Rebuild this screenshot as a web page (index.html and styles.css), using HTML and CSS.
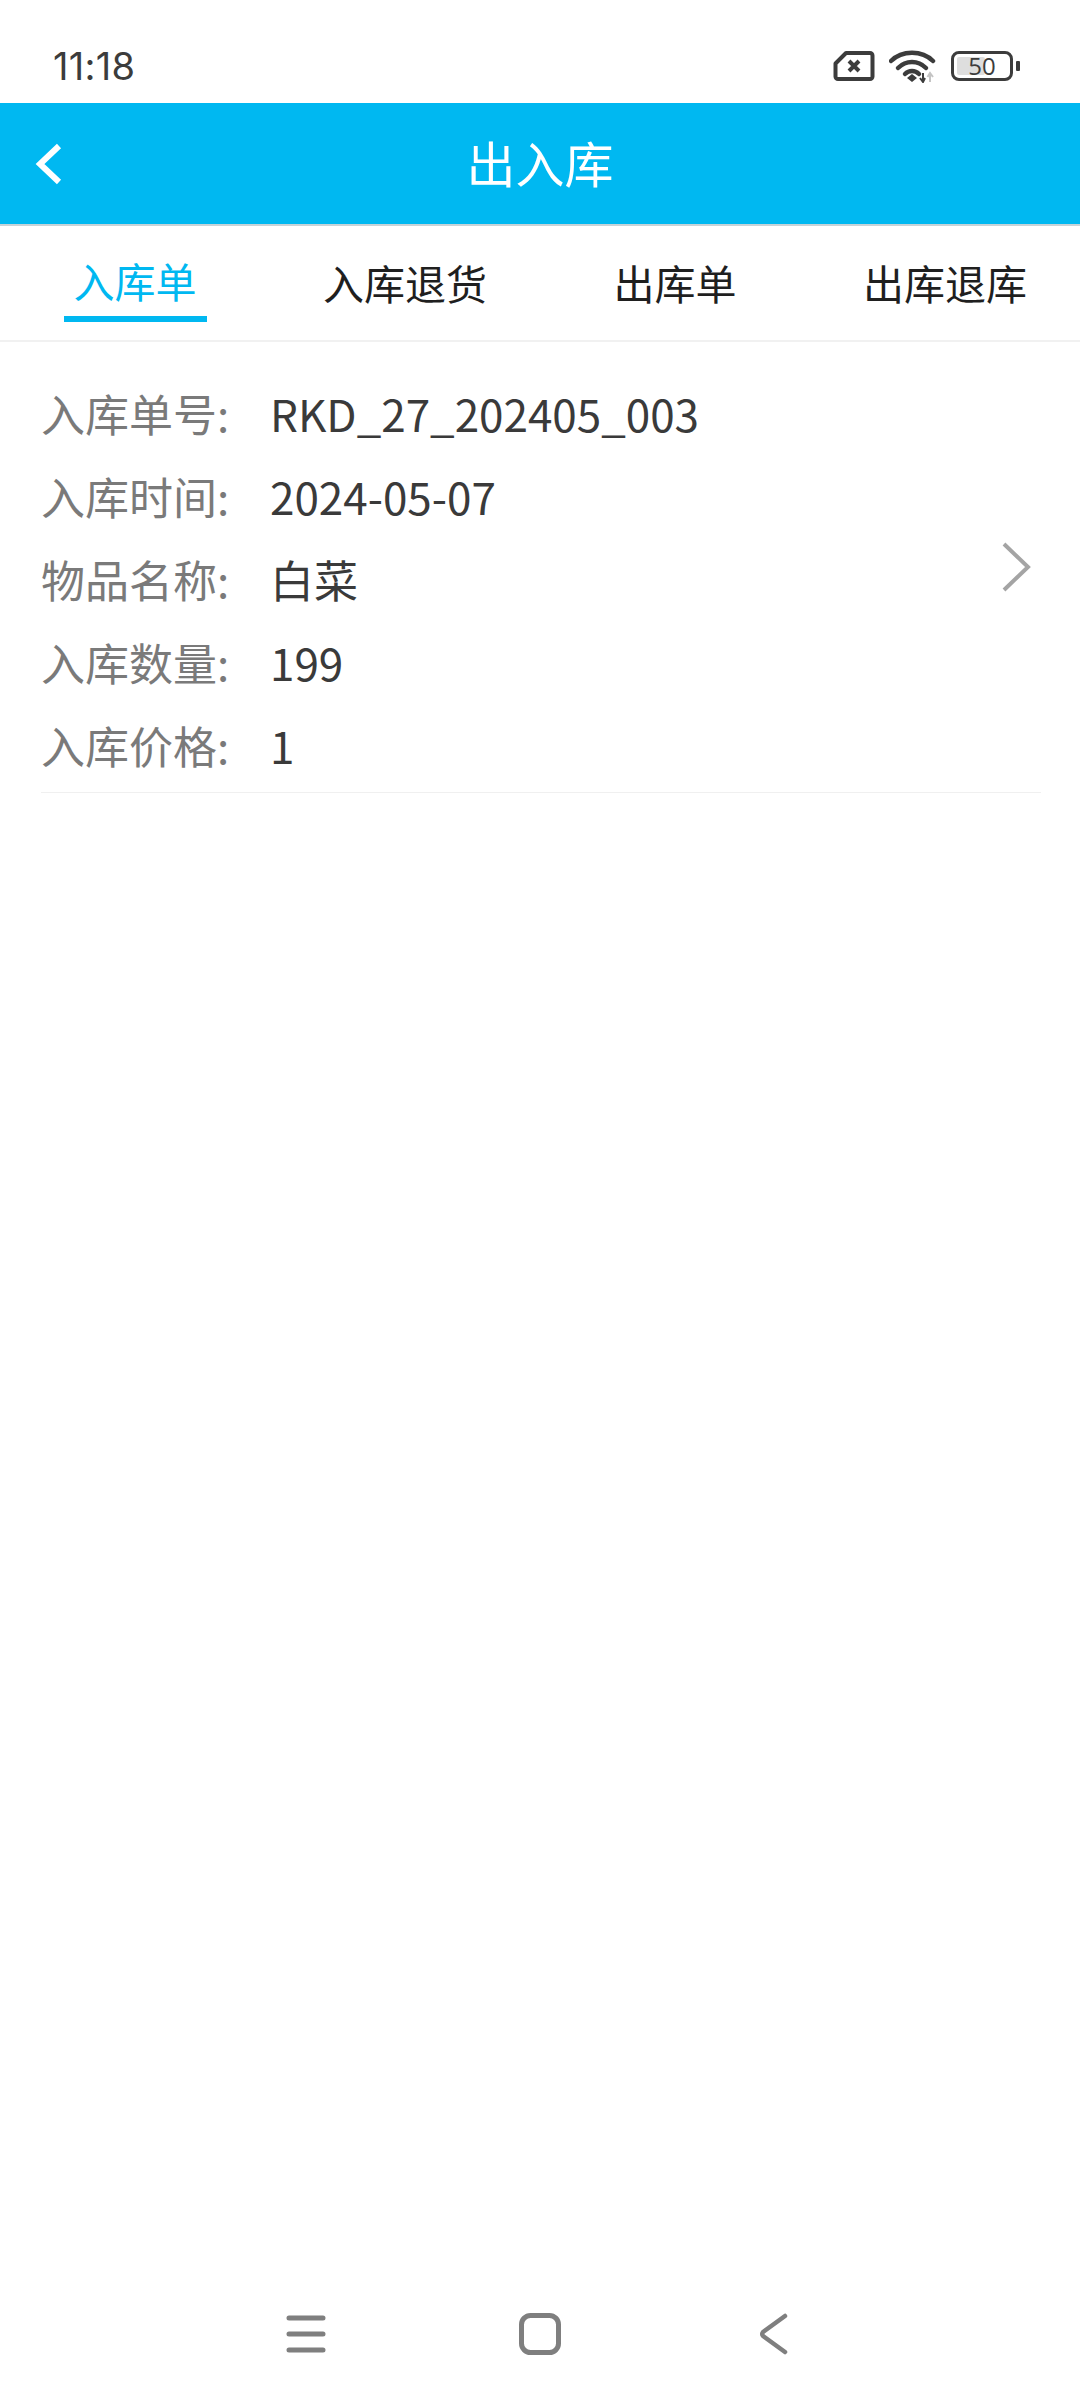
FILE: index.html
```html
<!DOCTYPE html>
<html lang="zh-CN">
<head>
  <meta charset="UTF-8">
  <meta name="viewport" content="width=device-width, initial-scale=1.0">
  <title>出入库</title>
  <link rel="stylesheet" href="styles.css">
</head>
<body>
  <div class="app">
    <div class="status-bar">
      <span class="time">11:18</span>
      <div class="status-icons">
        <svg class="icon-sim" width="42" height="32" viewBox="0 0 42 32">
          <path d="M13 3H37a2.500 2.500 0 0 1 2.500 2.500V26.500a2.500 2.500 0 0 1-2.500 2.500H5a2.500 2.500 0 0 1-2.500-2.500V13.500Z" fill="none" stroke="#3c3c3c" stroke-width="4" stroke-linejoin="round"/>
          <path d="M16 11L26 21M26 11L16 21" fill="none" stroke="#3c3c3c" stroke-width="4"/>
        </svg>
        <svg class="icon-wifi" width="48" height="34" viewBox="0 0 48 34">
          <path d="M2 12C13 1 33 1 44 12" fill="none" stroke="#3c3c3c" stroke-width="4.500" stroke-linecap="round"/>
          <path d="M9 19C17 11 29 11 37 19" fill="none" stroke="#3c3c3c" stroke-width="4.500" stroke-linecap="round"/>
          <path d="M16 25C20 21 26 21 30 25" fill="none" stroke="#3c3c3c" stroke-width="4.500" stroke-linecap="round"/>
          <path d="M18 29L23 25L28 29L23 33Z" fill="#3c3c3c"/>
          <path d="M34 24V33M31 29L34 33L36 29" fill="none" stroke="#3c3c3c" stroke-width="2"/>
          <path d="M41 33V24M38.500 28L41 24L44 28" fill="none" stroke="#c4c4c4" stroke-width="2"/>
        </svg>
        <div class="battery">
          <div class="battery-body">
            <div class="battery-level"></div>
            <span class="battery-text">50</span>
          </div>
          <div class="battery-cap"></div>
        </div>
      </div>
    </div>

    <div class="header">
      <svg class="header-back" width="30" height="44" viewBox="0 0 30 44">
        <path d="M25 4L6 22L25 40" fill="none" stroke="#fff" stroke-width="6"/>
      </svg>
      <span class="header-title">出入库</span>
    </div>

    <div class="tabs">
      <div class="tab active">入库单</div>
      <div class="tab">入库退货</div>
      <div class="tab">出库单</div>
      <div class="tab">出库退库</div>
    </div>

    <div class="record">
      <div class="record-fields">
        <div class="field"><span class="field-label">入库单号:</span><span class="field-value">RKD_27_202405_003</span></div>
        <div class="field"><span class="field-label">入库时间:</span><span class="field-value">2024-05-07</span></div>
        <div class="field"><span class="field-label">物品名称:</span><span class="field-value">白菜</span></div>
        <div class="field"><span class="field-label">入库数量:</span><span class="field-value">199</span></div>
        <div class="field"><span class="field-label">入库价格:</span><span class="field-value">1</span></div>
      </div>
      <svg class="record-arrow" width="30" height="50" viewBox="0 0 30 50">
        <path d="M2 2L26 25L2 48" fill="none" stroke="#a4a4a4" stroke-width="4"/>
      </svg>
    </div>

    <div class="nav-bar">
      <div class="nav-item">
        <svg width="40" height="38" viewBox="0 0 40 38">
          <path d="M3 3H37M3 19H37M3 35H37" fill="none" stroke="#7f7f7f" stroke-width="5" stroke-linecap="round"/>
        </svg>
      </div>
      <div class="nav-item">
        <svg width="42" height="42" viewBox="0 0 42 42">
          <rect x="2.500" y="2.500" width="37" height="37" rx="9" fill="none" stroke="#7f7f7f" stroke-width="5"/>
        </svg>
      </div>
      <div class="nav-item">
        <svg width="30" height="42" viewBox="0 0 30 42">
          <path d="M26 3L4 19Q2.500 21 4 23L26 39" fill="none" stroke="#7f7f7f" stroke-width="4.500" stroke-linecap="round"/>
        </svg>
      </div>
    </div>
  </div>
</body>
</html>
```

FILE: styles.css
```css
* {
  box-sizing: border-box;
}

body {
  margin: 0;
  background-color: #FFFFFF;
  font-family: "Noto Sans CJK SC", "Noto Sans", sans-serif;
}

.app {
  display: flex;
  flex-direction: column;
  width: 1080px;
  height: 2400px;
}

.status-bar {
  display: flex;
  justify-content: space-between;
  align-items: center;
  height: 103px;
  padding: 28px 60px 0 53px;
}

.time {
  font-family: "Inter", sans-serif;
  font-size: 38px;
  letter-spacing: 0.3px;
  color: #3c3c3c;
}

.status-icons {
  display: flex;
  align-items: center;
  gap: 14px;
}

.battery {
  display: flex;
  align-items: center;
  gap: 3px;
}

.battery-body {
  position: relative;
  display: flex;
  justify-content: center;
  align-items: center;
  width: 62px;
  height: 30px;
  border: 3px solid #3c3c3c;
  border-radius: 8px;
}

.battery-level {
  position: absolute;
  left: 3px;
  top: 3px;
  bottom: 3px;
  width: 28px;
  background-color: #dedede;
  border-radius: 2px;
}

.battery-text {
  position: relative;
  font-family: "Open Sans", sans-serif;
  font-size: 24px;
  line-height: 24px;
  color: #3c3c3c;
}

.battery-cap {
  width: 4px;
  height: 10px;
  background-color: #3c3c3c;
  border-radius: 1px;
}

.header {
  position: relative;
  display: flex;
  justify-content: center;
  align-items: center;
  flex-shrink: 0;
  height: 123px;
  padding-bottom: 5px;
  background-color: #00B8F1;
  border-bottom: 2px solid #c6d3d8;
}

.header-back {
  position: absolute;
  left: 34px;
  top: 39px;
}

.header-title {
  font-size: 49px;
  color: #FFFFFF;
}

.tabs {
  display: flex;
  flex-shrink: 0;
  height: 116px;
  border-bottom: 2px solid #f1f1f1;
}

.tab {
  flex: 1;
  display: flex;
  justify-content: center;
  padding-top: 28px;
  font-size: 41px;
  line-height: 56px;
  color: #1f1f1f;
}

.tab.active {
  position: relative;
  padding-top: 26px;
  color: #00B8F1;
}

.tab.active::after {
  content: "";
  position: absolute;
  left: 64px;
  right: 63px;
  top: 90px;
  height: 6px;
  background-color: #00B8F1;
}

.record {
  display: flex;
  justify-content: space-between;
  align-items: center;
  height: 451px;
  margin: 0 39px 0 41px;
  padding-right: 9px;
  border-bottom: 1px solid #f0f0f0;
}

.record-fields {
  display: flex;
  flex-direction: column;
  align-self: flex-start;
  padding-top: 29px;
}

.field {
  display: flex;
  align-items: center;
  height: 83px;
  font-size: 44px;
}

.field-label {
  width: 229px;
  color: #7a7a7a;
}

.field-value {
  color: #3a3a3a;
}

.nav-bar {
  display: flex;
  justify-content: center;
  align-items: center;
  height: 134px;
  margin-top: auto;
  padding-top: 2px;
}

.nav-item {
  display: flex;
  justify-content: center;
  width: 234px;
}
```
